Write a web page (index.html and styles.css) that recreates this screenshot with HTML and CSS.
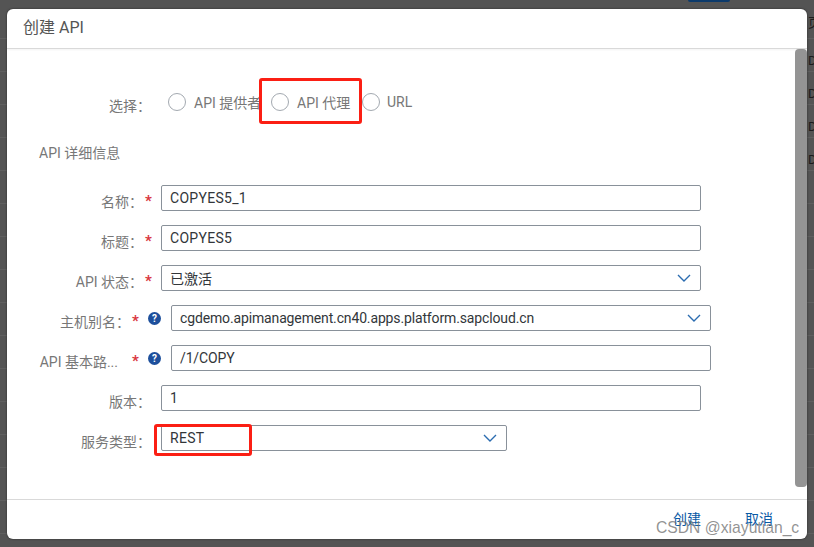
FILE: index.html
```html
<!DOCTYPE html>
<html lang="en">
<head>
    <meta charset="UTF-8">
    <meta name="viewport" content="width=device-width, initial-scale=1.0">
    <title>创建 API</title>
    <link rel="stylesheet" href="styles.css">
</head>
<body>
    <!-- page behind the dialog -->
    <div class="backdrop">
        <div class="back-button"></div>
        <div class="back-rows">
            <div class="back-row back-head">页</div>
            <div class="back-row">D.</div>
            <div class="back-row">D.</div>
            <div class="back-row">D.</div>
            <div class="back-row">D.</div>
        </div>
    </div>

    <div class="dialog">
        <header class="dialog-header">创建 API</header>

        <div class="dialog-body">
            <div class="content">
                <div class="choice-row">
                    <span class="choice-label">选择：</span>
                    <label class="radio radio-first"><span class="radio-dot"></span>API 提供者</label>
                    <label class="radio radio-second"><span class="radio-dot"></span>API 代理</label>
                    <label class="radio radio-third"><span class="radio-dot"></span>URL</label>
                </div>

                <h3 class="section-title">API 详细信息</h3>

                <div class="row">
                    <span class="label">名称：</span><span class="star">*</span>
                    <input class="field wide caps" type="text" value="COPYES5_1">
                </div>
                <div class="row">
                    <span class="label">标题：</span><span class="star">*</span>
                    <input class="field wide caps" type="text" value="COPYES5">
                </div>
                <div class="row">
                    <span class="label">API 状态：</span><span class="star">*</span>
                    <div class="field wide select">
                        <span>已激活</span>
                        <svg class="chevron" viewBox="0 0 14 8"><path d="M1 1l6 6 6-6"/></svg>
                    </div>
                </div>
                <div class="row row-help">
                    <span class="label">主机别名：</span><span class="star">*</span>
                    <span class="help">?</span>
                    <div class="field wide select tight">
                        <span>cgdemo.apimanagement.cn40.apps.platform.sapcloud.cn</span>
                        <svg class="chevron" viewBox="0 0 14 8"><path d="M1 1l6 6 6-6"/></svg>
                    </div>
                </div>
                <div class="row row-help">
                    <span class="label label-cut">API 基本路...</span><span class="star">*</span>
                    <span class="help">?</span>
                    <input class="field wide tight" type="text" value="/1/COPY">
                </div>
                <div class="row row-plain">
                    <span class="label">版本：</span>
                    <input class="field wide" type="text" value="1">
                </div>
                <div class="row row-plain">
                    <span class="label">服务类型：</span>
                    <div class="field narrow select caps">
                        <span>REST</span>
                        <svg class="chevron" viewBox="0 0 14 8"><path d="M1 1l6 6 6-6"/></svg>
                    </div>
                </div>
            </div>
            <div class="scrollbar"></div>
        </div>

        <footer class="dialog-footer">
            <button class="link-btn" type="button">创建</button>
            <button class="link-btn" type="button">取消</button>
        </footer>
    </div>

    <!-- annotations on top of the screenshot -->
    <div class="mark mark-radio"></div>
    <div class="mark mark-type"></div>
    <div class="watermark">CSDN @xiayutian_c</div>
</body>
</html>
```

FILE: styles.css
```css
* {
    box-sizing: border-box;
}

html, body {
    height: 100%;
}

body {
    margin: 0;
    padding: 9px 7px 8px;
    overflow: hidden;
    position: relative;
    background-color: #545454;
    font-family: Roboto, "Noto Sans CJK SC", sans-serif;
}

.backdrop {
    position: absolute;
    top: 0;
    left: 0;
    width: 100%;
    height: 100%;
    background-image: repeating-linear-gradient(to bottom, transparent 0, transparent 32px, #5f5f5f 32px, #5f5f5f 33px);
    background-position: 0 6px;
}

.back-button {
    position: absolute;
    top: 0;
    left: 688px;
    width: 42px;
    height: 2px;
    border-radius: 0 0 3px 3px;
    background-color: #0c3a6b;
}

.back-rows {
    position: absolute;
    top: 0;
    left: 808px;
    width: 6px;
    overflow: hidden;
    font-size: 13px;
    color: #1c1c1c;
}

.back-row {
    height: 33px;
    line-height: 44px;
    white-space: nowrap;
}

.back-head {
    height: 39px;
    line-height: 46px;
}

.dialog {
    position: relative;
    display: flex;
    flex-direction: column;
    width: 800px;
    height: 530px;
    background-color: #fff;
    border-radius: 6px;
    overflow: hidden;
    box-shadow: 0 0 2px #222;
}

.dialog-header {
    height: 40px;
    padding: 9px 16px 0;
    font-size: 16px;
    line-height: 20px;
    color: #555;
    border-bottom: 1px solid #d9d9d9;
    box-shadow: 0 1px 2px rgba(0, 0, 0, 0.05);
}

.dialog-body {
    flex: 1;
    display: flex;
    min-height: 0;
}

.content {
    flex: 1;
    padding-top: 43px;
}

.scrollbar {
    width: 12px;
    height: 438px;
    background-color: #949494;
    border-radius: 4px;
}

.choice-row {
    display: flex;
    height: 20px;
    align-items: center;
    font-size: 14px;
    color: #777;
}

.choice-label {
    width: 144px;
    margin-top: 5px;
    text-align: right;
}

.radio {
    display: flex;
    align-items: center;
    white-space: nowrap;
}

.radio-first {
    width: 103px;
    margin-left: 17px;
}

.radio-second {
    width: 91px;
}

.radio-third {
    width: 60px;
}

.radio-dot {
    width: 18px;
    height: 18px;
    margin-right: 8px;
    border: 1px solid #a3a9b0;
    border-radius: 50%;
    background-color: #fff;
}

.radio-third .radio-dot {
    margin-right: 7px;
}

.section-title {
    margin: 0;
    padding: 31px 0 0 32px;
    height: 73px;
    font-size: 14px;
    font-weight: normal;
    line-height: 20px;
    color: #777;
}

.row {
    display: flex;
    height: 26px;
    margin-bottom: 14px;
}

.label {
    width: 136px;
    padding-top: 7px;
    font-size: 14px;
    line-height: 20px;
    color: #777;
    text-align: right;
    white-space: nowrap;
}

.star {
    width: 18px;
    padding: 6px 0 0 2px;
    font-size: 15px;
    line-height: 20px;
    color: #d9363e;
    font-weight: bold;
}

.row-help .label {
    width: 123px;
}

.row-help .label-cut {
    padding-right: 12px;
}

.row-plain .label {
    width: 144px;
    margin-right: 10px;
}

.help {
    width: 13px;
    height: 13px;
    margin: 7px 10px 0 0;
    flex: none;
    border-radius: 50%;
    background-color: #1d4f9c;
    color: #fff;
    font-size: 10px;
    font-weight: bold;
    line-height: 13px;
    text-align: center;
}

.field {
    display: flex;
    align-items: center;
    justify-content: space-between;
    height: 26px;
    padding: 0 8px;
    border: 1px solid #89919a;
    border-radius: 2px;
    background-color: #fff;
    font-family: Roboto, "Noto Sans CJK SC", sans-serif;
    font-size: 14px;
    color: #32363a;
}

.wide {
    width: 540px;
}

.narrow {
    width: 346px;
}

.select {
    padding-right: 9px;
}

/* upper case runs a bit wider and the host a bit tighter than plain Roboto */
.caps {
    letter-spacing: 0.3px;
}

.tight {
    letter-spacing: -0.14px;
}

.chevron {
    width: 14px;
    height: 8px;
    fill: none;
    stroke: #2b6cb0;
    stroke-width: 1.4;
}

.dialog-footer {
    height: 40px;
    padding: 3px 34px 0 0;
    display: flex;
    justify-content: flex-end;
    gap: 44px;
    border-top: 1px solid #d9d9d9;
}

.link-btn {
    height: 30px;
    padding: 0;
    border: none;
    background: none;
    font-family: Roboto, "Noto Sans CJK SC", sans-serif;
    font-size: 14px;
    color: #0a5aa5;
}

.mark {
    position: absolute;
    border: 3px solid #fb1f14;
    border-radius: 3px;
}

.mark-radio {
    top: 78px;
    left: 259px;
    width: 103px;
    height: 46px;
}

.mark-type {
    top: 424px;
    left: 154px;
    width: 98px;
    height: 32px;
}

.watermark {
    position: absolute;
    top: 519px;
    left: 656px;
    font-family: "Liberation Sans", sans-serif;
    font-size: 15.7px;
    line-height: 18px;
    color: rgba(110, 110, 110, 0.75);
    white-space: nowrap;
}
```
